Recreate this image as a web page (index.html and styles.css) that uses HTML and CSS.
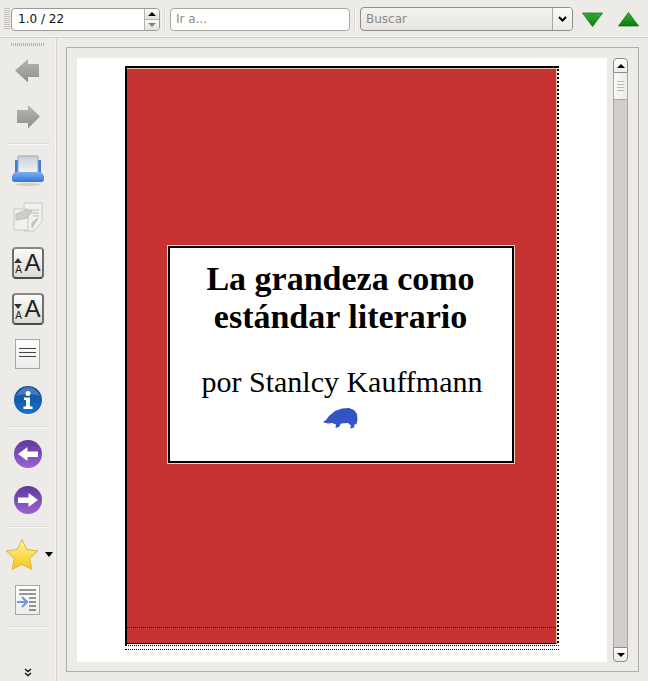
FILE: index.html
```html
<!DOCTYPE html>
<html lang="es">
<head>
<meta charset="utf-8">
<title>Visor</title>
<link rel="stylesheet" href="styles.css">
</head>
<body>
<svg class="defs" width="0" height="0">
  <defs>
    <linearGradient id="gGrey" x1="0" y1="0" x2="0" y2="1"><stop offset="0" stop-color="#b9b7b3"/><stop offset="1" stop-color="#8f8e8a"/></linearGradient>
    <linearGradient id="gBlue" x1="0" y1="0" x2="0" y2="1"><stop offset="0" stop-color="#7fb0ee"/><stop offset="1" stop-color="#2f74d8"/></linearGradient>
    <linearGradient id="gPaper" x1="0" y1="0" x2="0" y2="1"><stop offset="0" stop-color="#c9d0dc"/><stop offset="1" stop-color="#f7f7f7"/></linearGradient>
    <linearGradient id="gInfo" x1="0" y1="0" x2="0" y2="1"><stop offset="0" stop-color="#0f4a96"/><stop offset="1" stop-color="#1c70c4"/></linearGradient>
    <linearGradient id="gPurple" x1="0" y1="0" x2="0" y2="1"><stop offset="0" stop-color="#5d3a9e"/><stop offset="1" stop-color="#9a62cf"/></linearGradient>
    <linearGradient id="gStar" x1="0" y1="0" x2="0" y2="1"><stop offset="0" stop-color="#fff6a0"/><stop offset="1" stop-color="#f5c60e"/></linearGradient>
    <linearGradient id="gGreen" x1="0" y1="0" x2="0" y2="1"><stop offset="0" stop-color="#3dae3d"/><stop offset="1" stop-color="#0a7a0a"/></linearGradient>
    <linearGradient id="gDoc" x1="0" y1="0" x2="0" y2="1"><stop offset="0" stop-color="#ffffff"/><stop offset="1" stop-color="#ececea"/></linearGradient>
  </defs>
</svg>

<header class="topbar">
  <span class="grip"></span>
  <div class="spin">
    <span class="spin-value">1.0 / 22</span>
    <span class="spin-btns">
      <span class="spin-btn"><i class="tri tri-up"></i></span>
      <span class="spin-btn"><i class="tri tri-down-grey"></i></span>
    </span>
  </div>
  <span class="vsep"></span>
  <div class="goto">Ir a...</div>
  <span class="vsep"></span>
  <div class="combo">
    <span class="combo-text">Buscar</span>
    <span class="combo-btn">
      <svg width="9" height="6" viewBox="0 0 9 6"><path d="M1 1l3.5 3.5L8 1" fill="none" stroke="#000" stroke-width="2"/></svg>
    </span>
  </div>
  <span class="tbtn">
    <svg width="21" height="15" viewBox="0 0 21 15"><path d="M.5 1h20L10.500 14.500z" fill="url(#gGreen)" stroke="#0c7a0c" stroke-width=".8"/><path d="M5 2h11l-5.500 7z" fill="#2a9a2a"/></svg>
  </span>
  <span class="tbtn">
    <svg width="21" height="15" viewBox="0 0 21 15"><path d="M.5 14h20L10.500 .5z" fill="url(#gGreen)" stroke="#0c7a0c" stroke-width=".8"/></svg>
  </span>
</header>

<div class="main">
  <nav class="sidebar">
    <div class="side-grip"><span></span></div>

    <div class="item">
      <svg width="26" height="24" viewBox="0 0 26 24"><path d="M0 11.500L13 0v5h11v13H13v5.500z" fill="url(#gGrey)"/></svg>
    </div>
    <div class="item">
      <svg width="26" height="24" viewBox="0 0 26 24"><path d="M25 11.500L13 0v5H2v13h11v5.500z" fill="url(#gGrey)"/></svg>
    </div>
    <hr class="sep">

    <div class="item">
      <svg width="34" height="32" viewBox="0 0 34 32">
        <ellipse cx="17" cy="29.500" rx="13" ry="1.500" fill="#d0cec9"/>
        <rect x="4" y="5" width="26" height="16" fill="#3f7fd8"/>
        <rect x="7" y="1" width="20" height="19" fill="url(#gPaper)" stroke="#9aa3b0"/>
        <path d="M4 17h26l3 4v3q0 3-3 3H4q-3 0-3-3v-3z" fill="url(#gBlue)"/>
      </svg>
    </div>
    <div class="item">
      <svg width="32" height="32" viewBox="0 0 32 32">
        <path d="M12 2h18v19l-8 9H12z" fill="#f2f1ee" stroke="#c9c8c4"/>
        <path d="M2 8h14v21H2z" fill="#f2f1ee" stroke="#c9c8c4"/>
        <path d="M4 13l10-4 6 1-5 7-5 1-6 1zM17 9h10M19 12h8M21 15h6M20 22l6-5-6 10z" fill="#cfcdc9" stroke="#bdbbb7"/>
      </svg>
    </div>
    <div class="item">
      <span class="font-btn">
        <span class="font-small"><i class="mini mini-up"></i><span>A</span></span><span class="font-big">A</span>
      </span>
    </div>
    <div class="item">
      <span class="font-btn">
        <span class="font-small"><i class="mini mini-down"></i><span>A</span></span><span class="font-big">A</span>
      </span>
    </div>
    <div class="item item-list">
      <svg width="26" height="31" viewBox="0 0 26 31">
        <rect x=".5" y=".5" width="24" height="29" fill="url(#gDoc)" stroke="#a9a8a4"/>
        <path d="M4 9.500h17M4 13.500h17M4 17.500h17" stroke="#444" stroke-width="1"/>
      </svg>
    </div>
    <div class="item">
      <svg width="30" height="30" viewBox="0 0 30 30">
        <circle cx="15" cy="15" r="14" fill="url(#gInfo)"/>
        <path d="M3 11q5-9 12-9t12 9q-12-4-24 0z" fill="#5b8ec6" opacity=".7"/>
        <circle cx="15" cy="8.500" r="2.500" fill="#fff"/>
        <path d="M11 12.500h6v9h2.500v2.500h-9v-2.500H13v-6.500h-2z" fill="#fff"/>
      </svg>
    </div>
    <hr class="sep">

    <div class="item">
      <svg width="30" height="30" viewBox="0 0 30 30">
        <circle cx="15" cy="15" r="14" fill="url(#gPurple)"/>
        <path d="M5 15l9.500-7v4.500H25v5.500H14.500v4z" fill="#fff"/>
      </svg>
    </div>
    <div class="item">
      <svg width="30" height="30" viewBox="0 0 30 30">
        <circle cx="15" cy="15" r="14" fill="url(#gPurple)"/>
        <path d="M25 15l-9.500-7v4.500H5v5.500h10.500v4z" fill="#fff"/>
      </svg>
    </div>
    <hr class="sep">

    <div class="item item-star">
      <svg width="34" height="33" viewBox="0 0 34 33">
        <path d="M17 1.500l4.800 10 11 1.400-8 7.600 2 11L17 26.200 7.200 31.500l2-11-8-7.600 11-1.400z" fill="url(#gStar)" stroke="#d8b64a" stroke-linejoin="round"/>
      </svg>
      <i class="menu-tri"></i>
    </div>
    <div class="item">
      <svg width="26" height="31" viewBox="0 0 26 31">
        <rect x=".5" y=".5" width="24" height="29" fill="url(#gDoc)" stroke="#a9a8a4"/>
        <path d="M4 5h17M4 9h17M14 13h7M14 17h7M14 21h7M14 25h7" stroke="#333"/>
        <path d="M2 17h9M7 12l5 5-5 5" fill="none" stroke="#6f9ad6" stroke-width="2.200"/>
      </svg>
    </div>
    <hr class="sep">

    <div class="chevrons">
      <svg width="8" height="9" viewBox="0 0 8 9"><path d="M1 1l3 2.500L7 1M1 5l3 2.500L7 5" fill="none" stroke="#111" stroke-width="1.400"/></svg>
    </div>
  </nav>

  <main class="viewer">
    <div class="frame">
      <div class="canvas">
        <div class="sheet">
          <div class="cover">
            <div class="rule"></div>
            <div class="title-box">
              <h1 class="title">La grandeza como<br>estándar literario</h1>
              <p class="author">por Stanlcy Kauffmann</p>
              <svg class="pig" width="37" height="25" viewBox="0 0 37 25">
                <path d="M1 15l3-2 3-4 6-5 7-2.500 7-.5 5 2 3 4 .5 6-1 4-2 .5-.5 3-4 1 1-3-3-2.500-7 .5-2 3.500-3.500 1 .5-3.500-4-1.500-4 .5-4-1z" fill="#3453c4"/>
              </svg>
            </div>
          </div>
          <div class="sheet-dots"></div>
        </div>
      </div>
      <div class="scrollbar">
        <span class="sb-btn sb-top"><i class="tri tri-up"></i></span>
        <span class="sb-thumb"><i></i><i></i><i></i><i></i></span>
        <span class="sb-track"></span>
        <span class="sb-btn sb-bottom"><i class="tri tri-down"></i></span>
      </div>
    </div>
  </main>
</div>
</body>
</html>
```

FILE: styles.css
```css
* { box-sizing: border-box; }

html, body {
  margin: 0;
  height: 681px;
  overflow: hidden;
}

body {
  background: #edebe7;
  font-family: "DejaVu Sans", sans-serif;
  font-size: 12px;
  color: #000;
}

.defs { display: block; height: 0; }

/* Top toolbar */
.topbar {
  height: 38px;
  display: flex;
  align-items: center;
  padding: 1px 0 0 4px;
  border-bottom: 1px solid #cfccc7;
  box-shadow: inset 0 -1px 0 #f8f7f5;
}

.grip {
  width: 6px;
  height: 22px;
  background: repeating-linear-gradient(to bottom, #c6c3be 0 1px, transparent 1px 2px);
}

.spin {
  width: 149px;
  height: 23px;
  margin-left: 1px;
  display: flex;
  background: #fff;
  border: 1px solid #9c9a95;
  border-radius: 4px;
  overflow: hidden;
}

.spin-value {
  flex: 1;
  padding: 3px 0 0 6px;
  font-size: 12px;
  color: #111;
}

.spin-btns {
  width: 15px;
  display: flex;
  flex-direction: column;
  border-left: 1px solid #b5b3ae;
}

.spin-btn {
  flex: 1;
  display: flex;
  align-items: center;
  justify-content: center;
  background: linear-gradient(#fbfaf8, #e3e1dc);
  border-bottom: 1px solid #b5b3ae;
}

.spin-btn:last-child { border-bottom: 0; }

.tri { display: block; width: 0; height: 0; border-left: 4px solid transparent; border-right: 4px solid transparent; }
.tri-up { border-bottom: 4px solid #000; }
.tri-down { border-top: 4px solid #000; }
.tri-down-grey { border-top: 4px solid #85837f; }

.vsep {
  width: 2px;
  height: 24px;
  margin: 0 4px;
  background: linear-gradient(to right, #dcdad5 1px, #f8f7f5 1px);
}

.goto {
  width: 180px;
  height: 23px;
  padding: 3px 0 0 5px;
  background: #fff;
  border: 1px solid #aaa8a3;
  border-radius: 4px;
  color: #8b8a86;
}

.combo {
  width: 213px;
  height: 24px;
  display: flex;
  background: linear-gradient(#f4f3f0, #e6e4df);
  border: 1px solid #8f8d88;
  border-radius: 4px;
  overflow: hidden;
  color: #8b8a86;
}

.combo-text { flex: 1; padding: 4px 0 0 5px; }

.combo-btn {
  width: 20px;
  display: flex;
  align-items: center;
  justify-content: center;
  border-left: 1px solid #aaa8a3;
  background: linear-gradient(#fbfaf8, #ebe9e5);
}

.tbtn {
  width: 36px;
  display: flex;
  justify-content: center;
  margin-left: 1px;
}

.tbtn + .tbtn { margin-left: 0; }

/* Main area */
.main {
  height: 643px;
  display: flex;
}

.sidebar {
  width: 57px;
  flex: none;
  display: flex;
  flex-direction: column;
  align-items: center;
  border-right: 1px solid #d4d1cc;
  box-shadow: inset -1px 0 0 #f7f6f4;
}

.side-grip {
  height: 10px;
  padding-top: 5px;
}

.side-grip span {
  display: block;
  width: 34px;
  height: 3px;
  background: repeating-linear-gradient(to right, #b5b3ae 0 1px, transparent 1px 2px);
}

.item {
  height: 46px;
  width: 100%;
  flex: none;
  display: flex;
  align-items: center;
  justify-content: center;
  padding-right: 1px;
  position: relative;
}

.item-list { height: 45px; }
.item-star { justify-content: flex-start; padding-left: 5px; }

.sep {
  width: 42px;
  height: 2px;
  margin: 3px 0;
  flex: none;
  border: 0;
  border-top: 1px solid #dedcd8;
  border-bottom: 1px solid #f9f8f6;
}

.menu-tri {
  position: absolute;
  left: 45px;
  top: 21px;
  width: 0;
  height: 0;
  border-left: 4.500px solid transparent;
  border-right: 4.500px solid transparent;
  border-top: 5px solid #000;
}

.font-btn {
  width: 32px;
  height: 32px;
  display: flex;
  align-items: flex-end;
  justify-content: center;
  gap: 2px;
  padding-bottom: 2px;
  background: linear-gradient(#fafaf8, #dddbd7);
  border: 2px solid;
  border-color: #8a8986 #6f6e6b #4a4a48;
  border-radius: 4px;
  font-family: "Liberation Sans", sans-serif;
  color: #222;
}

.font-small {
  display: flex;
  flex-direction: column;
  align-items: center;
  gap: 2px;
  font-size: 10px;
  line-height: 10px;
}

.font-big {
  font-size: 24px;
  line-height: 25px;
}

.mini { display: block; width: 0; height: 0; border-left: 4px solid transparent; border-right: 4px solid transparent; }
.mini-up { border-bottom: 5px solid #333; }
.mini-down { border-top: 5px solid #333; }

.chevrons {
  margin-top: auto;
  height: 13px;
  padding-right: 1px;
  display: flex;
  align-items: flex-start;
}

/* Viewer */
.viewer {
  flex: 1;
  padding: 9px;
}

.frame {
  height: 625px;
  display: flex;
  padding: 10px 9px 9px 10px;
  border: 1px solid #aeaca7;
}

.canvas {
  width: 530px;
  flex: none;
  background: #fff;
}

.sheet {
  margin: 8px 0 0 48px;
  width: 434px;
  border-top: 2px solid #000;
  border-left: 2px solid #000;
  border-right: 2px dotted #000;
}

.cover {
  height: 576px;
  width: 430px;
  background: #c73232;
  border-top: 1px solid #e2c9a0;
  border-right: 1px solid #e2c9a0;
  border-bottom: 1px solid #000;
  display: flex;
  align-items: flex-start;
  justify-content: center;
  position: relative;
}

.sheet-dots {
  height: 5px;
  margin-top: 1px;
  margin-left: -2px;
  margin-right: -2px;
  border-top: 1px dotted #000;
  border-bottom: 1px dotted #000;
  background: #fff;
}

.rule {
  position: absolute;
  left: 0;
  right: 0;
  bottom: 15px;
  border-top: 1px dotted #2a0808;
}

.title-box {
  width: 346px;
  height: 217px;
  margin-top: 177px;
  margin-right: 2px;
  background: #fff;
  border: 2px solid #000;
  outline: 1px solid #e8d9c0;
  display: flex;
  flex-direction: column;
  align-items: center;
  font-family: "Liberation Serif", serif;
}

.title {
  margin: 12px 0 0;
  font-size: 34px;
  font-weight: 700;
  line-height: 38px;
  text-align: center;
  white-space: nowrap;
}

.author {
  margin: 28px 0 0;
  padding-left: 3px;
  font-size: 30px;
  line-height: 36px;
  white-space: nowrap;
}

.pig { display: block; margin-top: 7px; }

/* Scrollbar */
.scrollbar {
  width: 15px;
  margin-left: 6px;
  height: 604px;
  display: flex;
  flex-direction: column;
  align-items: stretch;
}

.sb-btn {
  height: 15px;
  flex: none;
  display: flex;
  align-items: center;
  justify-content: center;
  background: linear-gradient(#fdfdfc, #eeece8);
  border: 1px solid #8f8d88;
}

.sb-top { border-radius: 4px 4px 0 0; }
.sb-bottom { border-radius: 0 0 4px 4px; }

.sb-thumb {
  height: 27px;
  flex: none;
  display: flex;
  flex-direction: column;
  align-items: center;
  justify-content: center;
  gap: 2px;
  background: linear-gradient(to right, #fbfaf8, #eeece8);
  border: 1px solid #a9a7a2;
  border-top: 0;
}

.sb-thumb i {
  display: block;
  width: 7px;
  height: 1px;
  background: #bcbab5;
}

.sb-track {
  flex: 1;
  background: #d3cfc8;
  border-left: 1px solid #a9a7a2;
  border-right: 1px solid #a9a7a2;
}
```
